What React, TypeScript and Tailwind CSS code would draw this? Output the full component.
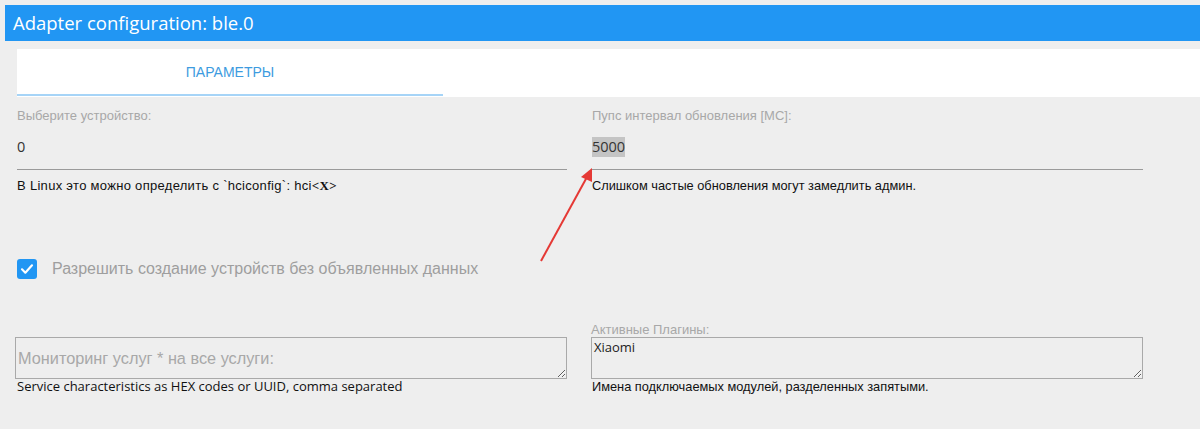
import React from 'react';

const arial = { fontFamily: '"Liberation Sans", Arial, sans-serif' };

// Поле с подчёркиванием, как в материал-дизайне админки
function UnderlineField({ label, value, help, highlight, helpClass = '' }: { label: string; value: string; help: React.ReactNode; highlight?: boolean; helpClass?: string }) {
    return (
        <div className="flex flex-col">
            <div className="h-[31px] pt-[11px] text-[13px] leading-[15px] text-[#a8a8a8]">{label}</div>
            <div className="h-[42px] border-b border-[#9a9a9a] flex items-start pt-[9px]">
                <span className={`text-[14.5px] leading-[20px] text-[#333] font-['Open_Sans',sans-serif] ${highlight ? 'bg-[#c4c4c4]' : ''}`}>{value}</span>
            </div>
            <div className={`pt-[8px] text-[12.8px] leading-[15px] text-[#111] ${helpClass}`}>{help}</div>
        </div>
    );
}

function AreaField({ label, value, placeholder, help, helpFont }: { label?: string; value?: string; placeholder?: string; help: string; helpFont: string }) {
    return (
        <div className="flex flex-col">
            <div className="h-[14px] text-[13px] leading-[14px] text-[#a8a8a8]">{label}</div>
            <textarea
                readOnly
                value={value}
                placeholder={placeholder}
                className="block w-full h-[42px] border border-[#a9a9a9] bg-transparent px-[2px] py-[1px] text-[13px] leading-[17px] text-[#222] font-['Open_Sans',sans-serif] placeholder:text-[#a8a8a8] placeholder:text-[16.3px] placeholder:leading-[38px] placeholder:font-['Liberation_Sans',Arial,sans-serif] resize-y outline-none"
            />
            <div className={`leading-[15px] text-[#111] ${helpFont}`}>{help}</div>
        </div>
    );
}

export default function App() {
    return (
        <div className="relative w-[1200px] h-[429px] overflow-hidden bg-[#eeeeee] pt-[5px] pl-[5px]" style={arial}>
            <div className="h-[36px] bg-[#2196f3] text-white text-[18.5px] pl-[8px] flex items-center font-['Open_Sans',sans-serif]">
                Adapter configuration: ble.0
            </div>

            <div className="mt-[8px] ml-[12px] h-[48px] bg-white flex">
                <div className="w-[426px] flex flex-col">
                    <div className="flex-1 flex items-center justify-center pt-[2px] text-[14px] text-[#3d9be0]">ПАРАМЕТРЫ</div>
                    <div className="h-[2px] bg-[#a6d4f7] mb-[1px]" />
                </div>
            </div>

            <div className="pl-[12px]">
                <div className="grid grid-cols-[550px_551px] gap-x-[25px]">
                    <UnderlineField
                        label="Выберите устройство:"
                        value="0"
                        helpClass="text-[13px] tracking-[0.3px]"
                        help={<>В Linux это можно определить с `hciconfig`: hci<b className="font-bold font-['Liberation_Serif',serif]">&lt;X&gt;</b></>}
                    />
                    <UnderlineField
                        label="Пупс интервал обновления [МС]:"
                        value="5000"
                        highlight
                        help="Слишком частые обновления могут замедлить админ."
                    />
                </div>

                <div className="mt-[66px] h-[20px] flex items-center gap-[15px]">
                    <div className="w-[20px] h-[20px] rounded-[3px] bg-[#2196f3] flex items-center justify-center">
                        <svg width="16" height="16" viewBox="0 0 24 24" fill="none" stroke="white" strokeWidth="3.2" strokeLinecap="round" strokeLinejoin="round">
                            <path d="M4.5 12.5l5 5L19.5 6.5" />
                        </svg>
                    </div>
                    <span className="text-[16px] text-[#9e9e9e]">Разрешить создание устройств без объявленных данных</span>
                </div>

                <div className="mt-[44px] grid grid-cols-[552px_552px] gap-x-[24px] -ml-[2px]">
                    <AreaField
                        placeholder="Мониторинг услуг * на все услуги:"
                        help="Service characteristics as HEX codes or UUID, comma separated"
                        helpFont="font-['Open_Sans',sans-serif] text-[13px] pl-[2px]"
                    />
                    <AreaField
                        label="Активные Плагины:"
                        value="Xiaomi"
                        help="Имена подключаемых модулей, разделенных запятыми."
                        helpFont="text-[12.8px] pl-[1px]"
                    />
                </div>
            </div>

            {/* красная стрелка-пометка поверх формы */}
            <svg className="absolute left-0 top-0 pointer-events-none" width="1200" height="429">
                <line x1="541" y1="261" x2="587" y2="177" stroke="#e53935" strokeWidth="2" />
                <polygon points="592,168 581,177 592,182" fill="#e53935" />
            </svg>
        </div>
    );
}
